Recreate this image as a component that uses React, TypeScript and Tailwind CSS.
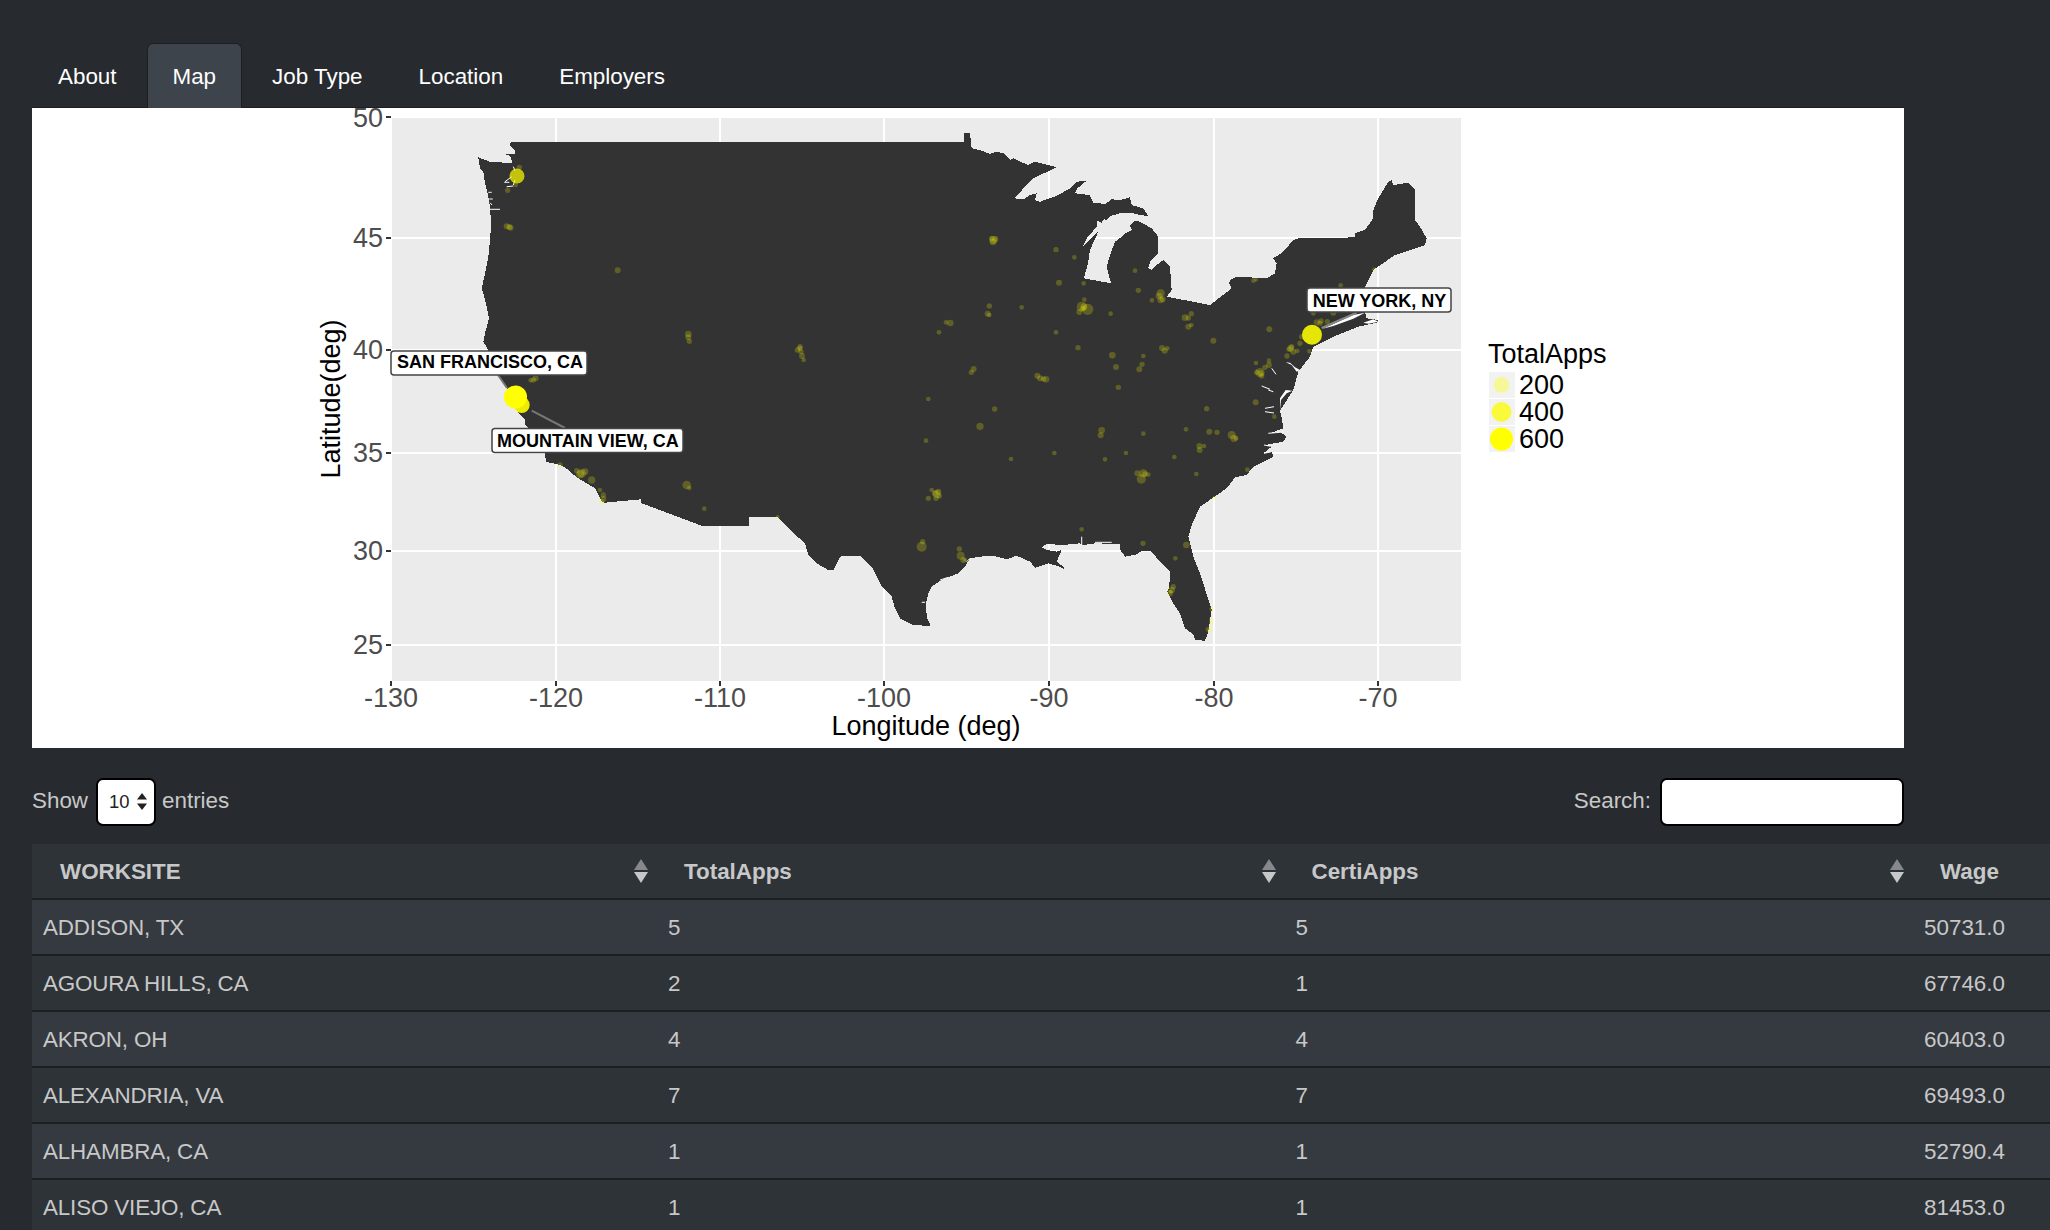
import React from "react";

type P = [number, number];
const seg = (tx: number, ty: number, pts: number[][]): P[] => pts.map(([x, y]) => [tx + x / 3, ty + y / 3] as P);
const A: P = [470, 130], B: P = [800, 130], C: P = [1120, 130], D: P = [470, 390], E: P = [800, 390], F: P = [1120, 390];
const at = (o: P, pts: number[][]) => seg(o[0], o[1], pts);
const toD = (pts: P[], close = true) =>
  pts.map((p, i) => `${i ? "L" : "M"}${p[0].toFixed(1)} ${p[1].toFixed(1)}`).join("") + (close ? "Z" : "");

const land: P[] = [
  ...at(A, [[122,36],[120,48],[133,58],[136,72],[105,72],[120,78],[128,100],[105,98],[60,95],[25,82],[30,115],[40,125],[45,160],[52,185],[58,215],[62,260],[63,290],[60,330],[55,380],[45,430],[35,475],[40,490],[50,530],[57,565],[45,610],[40,635],[55,660],[85,735],[110,775]]),
  ...at(D, [[130,50],[165,90],[165,105],[190,130],[225,190],[228,215],[270,225],[285,232],[320,262],[375,295],[395,335],[405,338],[512,328],[515,340],[695,407],[837,407],[837,380],[920,380],[935,395],[980,440]]),
  ...at(E, [[0,445],[15,460],[25,495],[50,520],[85,540],[100,540],[115,510],[125,497],[180,498],[215,530],[245,590],[275,620],[285,655],[300,685],[340,705],[392,708],[380,680],[378,640],[385,610],[395,590],[425,570],[475,550],[495,530],[510,505],[540,500],[580,497],[620,508],[650,497],[690,515],[705,533],[745,520],[780,530],[790,537],[793,532],[770,515],[785,480],[770,485],[740,480],[725,472],[740,462],[790,465],[840,460],[850,465],[885,460],[960,462]]),
  ...at(F, [[0,478],[15,500],[50,493],[65,482],[90,482],[150,545],[148,590],[142,605],[160,640],[180,670],[195,715],[222,735],[225,750],[255,752],[265,725],[275,660],[240,550],[220,500],[205,440],[215,405],[240,350],[320,295],[345,262],[380,255],[400,230],[460,200],[455,185],[430,190],[455,170],[435,165],[490,155],[500,140],[480,125],[450,130],[490,115],[485,85],[480,62],[520,0]]),
  ...at(C, [[535,725],[570,680],[580,650],[640,620],[715,590],[775,577],[775,570],[740,565],[735,545],[735,470],[760,420],[825,375],[835,372],[915,345],[920,325],[900,290],[885,270],[885,180],[865,158],[820,165],[815,150],[805,155],[775,205],[760,240],[760,265],[735,300],[705,310],[705,322],[600,325],[535,325],[520,330],[490,365],[460,385],[470,400],[465,430],[440,445],[350,440],[330,450],[328,460],[335,475],[270,525],[140,500],[155,480],[150,410],[130,390],[110,405],[95,420],[85,415],[90,395],[115,370],[115,320],[95,295],[60,275],[45,272],[30,285],[35,300],[15,310],[5,320]]),
  ...at(B, [[945,335],[930,375],[920,410],[933,460],[852,445],[865,395],[870,360],[895,305],[848,352],[860,325],[890,290],[892,272],[905,278],[912,268],[920,270],[932,258],[960,250]]),
  ...at(C, [[40,250],[60,255],[85,258],[70,235],[35,225],[30,202],[0,210]]),
  ...at(B, [[935,208],[915,222],[880,218],[868,195],[825,190],[832,175],[860,152],[830,155],[810,175],[775,195],[750,205],[720,215],[705,210],[710,190],[690,195],[670,208],[642,205],[700,145],[770,112],[745,105],[705,95],[685,105],[660,95],[640,85],[630,90],[610,70],[590,65],[570,72],[545,62],[515,55],[510,10],[492,10],[492,36]]),
];

const whiteShapes: P[][] = [
  at(C, [[608,596],[700,555],[735,548],[700,566],[640,588]]),
  at(C, [[730,578],[760,568],[775,575],[745,581]]),
  at(C, [[497,697],[515,705],[530,725],[540,720],[525,712],[510,698]]),
  at(F, [[480,60],[483,30],[500,10],[517,2],[497,0],[480,25]]),
];
const whiteLines: P[][] = [
  at(A, [[105,155],[125,140]]), at(A, [[130,110],[135,122]]), at(A, [[135,150],[130,165]]), at(A, [[103,157],[118,157]]), at(A, [[110,170],[130,168]]),
  at(A, [[55,187],[65,187]]), at(A, [[58,207],[68,207]]), at(A, [[60,218],[66,225]]), at(A, [[60,238],[90,238]]),
  at(E, [[420,570],[445,562]]), at(E, [[500,515],[510,505]]), at(E, [[365,637],[375,637]]), at(E, [[845,440],[845,465]]), at(E, [[885,457],[935,457]]),
  at(C, [[455,715],[468,733]]), at(C, [[425,768],[450,778]]),
  at(F, [[445,0],[460,5]]), at(F, [[435,55],[462,50]]), at(F, [[435,65],[462,69]]), at(F, [[445,130],[490,126]]), at(F, [[432,165],[452,169]]), at(F, [[432,190],[452,186]]),
];

const dots: P[] = [];
const radii: number[] = [];
const addDots = (o: P, list: number[][]) => list.forEach(([x, y, r]) => { dots.push([o[0] + x / 3, o[1] + y / 3]); radii.push(r / 3); });
addDots(A, [[148,112,8],[113,181,8],[137,165,7],[110,289,9],[118,291,9],[122,293,9],[443,421,9],[655,612,10],[655,622,9],[658,634,8],[982,660,8],[990,655,8],[190,750,8],[197,745,9],[182,751,7]]);
addDots(B, [[580,330,12],[575,325,8],[586,327,9],[579,336,10],[768,359,8],[823,382,7],[777,458,9],[851,460,7],[853,509,7],[845,530,15],[863,538,17],[838,546,9],[852,530,10],[848,535,8],[932,551,7],[568,528,8],[665,532,7],[563,551,9],[568,555,7],[451,579,10],[438,577,7],[417,607,7],[768,607,7],[834,653,8],[937,676,10],[948,711,9],[0,650,8],[3,665,8],[6,678,9],[11,690,7],[521,717,9],[514,727,8],[712,737,9],[720,745,9],[730,747,8],[738,748,10],[955,772,8]]);
addDots(C, [[45,422,7],[55,481,8],[122,490,12],[117,498,10],[128,508,9],[122,510,10],[96,511,7],[400,452,7],[408,449,6],[662,466,7],[195,563,10],[205,564,8],[214,551,8],[205,590,9],[214,585,7],[280,632,9],[448,598,9],[590,577,9],[603,573,8],[600,580,8],[622,575,8],[580,550,7],[640,548,9],[545,620,8],[540,640,8],[512,655,10],[515,650,8],[507,658,8],[520,665,9],[532,663,7],[501,678,8],[568,664,7],[126,654,9],[134,662,9],[142,655,7],[70,678,7],[66,703,8],[58,718,9],[408,699,7],[447,692,7],[447,705,9],[435,712,8],[420,728,14],[422,730,9],[410,727,8],[425,738,8],[762,418,6]]);
addDots(D, [[270,225,8],[320,242,8],[335,250,13],[345,245,10],[330,253,12],[365,270,11],[390,300,7],[400,315,8],[400,327,9],[395,335,8],[650,285,13],[658,294,7],[703,356,7],[923,381,6]]);
addDots(E, [[385,27,7],[584,57,8],[540,109,11],[378,152,7],[633,207,7],[763,189,7],[905,121,10],[902,136,9],[915,208,7],[845,418,7],[395,300,7],[410,312,12],[405,310,9],[415,305,9],[418,318,8],[385,325,8],[408,325,8],[368,455,8],[365,470,15],[478,477,8],[482,497,12],[490,510,9],[495,510,6]]);
addDots(F, [[407,37,9],[260,56,8],[463,80,7],[70,131,7],[198,118,7],[268,125,9],[291,127,8],[335,135,12],[342,145,11],[348,145,7],[238,168,9],[252,168,7],[239,180,9],[18,189,7],[163,201,7],[229,252,7],[52,250,9],[70,250,12],[75,252,8],[85,254,7],[64,267,14],[382,239,7],[284,324,7],[69,460,8],[199,465,10],[166,505,7],[160,590,8],[155,600,10],[150,610,9],[152,605,6],[275,657,7],[274,690,7],[265,718,8],[270,720,7],[273,700,6]]);

const xTicks: [number, string][] = [[391,"-130"],[556,"-120"],[720,"-110"],[884,"-100"],[1049,"-90"],[1214,"-80"],[1378,"-70"]];
const yTicks: [number, string][] = [[117,"50"],[238,"45"],[350,"40"],[453,"35"],[551,"30"],[645,"25"]];

function Tag({ x, y, w, tx, by, text }: { x: number; y: number; w: number; tx: number; by: number; text: string }) {
  return (
    <g>
      <rect x={x} y={y} width={w} height={24} rx={3} fill="#fff" stroke="#444" strokeWidth={1.5} />
      <text x={tx} y={by} fontSize={18} fontWeight={700} fill="#000">{text}</text>
    </g>
  );
}

function MapChart() {
  return (
    <svg viewBox="32 108 1872 640" width={1872} height={640} className="block">
      <rect x={391} y={117} width={1070} height={564} fill="#ebebeb" />
      {yTicks.map(([y]) => <rect key={y} x={391} y={y - 1} width={1070} height={2} fill="#fff" />)}
      {xTicks.map(([x]) => <rect key={x} x={x - 1} y={117} width={2} height={564} fill="#fff" />)}
      <path d={toD(land)} fill="#333333" shapeRendering="crispEdges" />
      {whiteShapes.map((s, i) => <path key={i} d={toD(s)} fill="#fff" />)}
      {whiteLines.map((s, i) => <path key={i} d={toD(s, false)} stroke="#fff" strokeWidth={1} fill="none" />)}
      {dots.map((p, i) => <circle key={i} cx={p[0]} cy={p[1]} r={radii[i]} fill="#ffff00" fillOpacity={0.22} />)}
      <circle cx={517} cy={176} r={7.5} fill="#ffff00" fillOpacity={0.7} />
      <circle cx={1312} cy={334.7} r={10} fill="#ffff00" fillOpacity={0.88} />
      <circle cx={521.7} cy={405} r={8} fill="#ffff00" fillOpacity={0.9} />
      <circle cx={515.5} cy={397} r={11.5} fill="#ffff00" />
      <path d="M498 375L507 388" stroke="#777" strokeWidth={2} />
      <path d="M531.7 410.7L565 428" stroke="#777" strokeWidth={2} />
      <path d="M1321.7 328L1356.7 312.7" stroke="#888" strokeWidth={2} />
      <Tag x={391} y={351} w={196} tx={397} by={368} text="SAN FRANCISCO, CA" />
      <Tag x={492} y={428.5} w={191} tx={497} by={447} text="MOUNTAIN VIEW, CA" />
      <Tag x={1307} y={288} w={144} tx={1312.7} by={306.5} text="NEW YORK, NY" />
      {xTicks.map(([x, t]) => (
        <g key={t}>
          <rect x={x - 1} y={681} width={2} height={5} fill="#333" />
          <text x={x} y={707} fontSize={27} fill="#4d4d4d" textAnchor="middle">{t}</text>
        </g>
      ))}
      {yTicks.map(([y, t]) => (
        <g key={t}>
          <rect x={386} y={y - 1} width={5} height={2} fill="#333" />
          <text x={383} y={t === "50" ? y + 10 : y + 9} fontSize={27} fill="#4d4d4d" textAnchor="end">{t}</text>
        </g>
      ))}
      <text x={926} y={735} fontSize={27} fill="#000" textAnchor="middle">Longitude (deg)</text>
      <text transform="translate(340 399) rotate(-90)" fontSize={27} fill="#000" textAnchor="middle">Latitude(deg)</text>
      <text x={1488} y={363} fontSize={27} fill="#000">TotalApps</text>
      {[
        { y: 372, cy: 385, r: 8, c: "#f7f79a", t: "200", b: 394 },
        { y: 399, cy: 412, r: 10, c: "#fafa3c", t: "400", b: 421 },
        { y: 426, cy: 439, r: 11.5, c: "#ffff00", t: "600", b: 448 },
      ].map((l) => (
        <g key={l.t}>
          <rect x={1489} y={l.y} width={26} height={26} fill="#f2f2f2" />
          <circle cx={1501.5} cy={l.cy} r={l.r} fill={l.c} />
          <text x={1519} y={l.b} fontSize={27} fill="#000">{l.t}</text>
        </g>
      ))}
    </svg>
  );
}

function SortIcon() {
  return (
    <svg width={14} height={24} viewBox="0 0 14 24" className="shrink-0">
      <path d="M7 0L14 11H0Z" fill="#85898d" />
      <path d="M0 13H14L7 24Z" fill="#c8c8c8" />
    </svg>
  );
}

const rows = [
  ["ADDISON, TX", "5", "5", "50731.0"],
  ["AGOURA HILLS, CA", "2", "1", "67746.0"],
  ["AKRON, OH", "4", "4", "60403.0"],
  ["ALEXANDRIA, VA", "7", "7", "69493.0"],
  ["ALHAMBRA, CA", "1", "1", "52790.4"],
  ["ALISO VIEJO, CA", "1", "1", "81453.0"],
];

const tabs = ["About", "Map", "Job Type", "Location", "Employers"];

export default function App() {
  return (
    <div className="h-[1230px] w-[2050px] overflow-hidden bg-[#272b30] font-['Liberation_Sans',Arial,sans-serif] text-[22.4px] text-[#c8c8c8]">
      <div className="ml-[32px] flex h-[108px] w-[1872px] items-end gap-[4px] border-b border-[#1c1e22]">
        {tabs.map((t) => (
          <div
            key={t}
            className={
              t === "Map"
                ? "-mb-[1px] flex h-[65px] items-center rounded-t-[6px] border border-b-0 border-[#1c1e22] bg-[#3e444c] px-[25px] pt-[2px] text-white"
                : "-mb-[1px] flex h-[65px] items-center border border-transparent px-[25px] pt-[2px] text-white"
            }
          >
            {t}
          </div>
        ))}
      </div>
      <div className="ml-[32px] h-[640px] w-[1872px] bg-white">
        <MapChart />
      </div>
      <div className="ml-[32px] flex h-[96px] w-[1872px] items-start justify-between pt-[30px]">
        <div className="flex h-[48px] items-center">
          <span className="-mt-[2px]">Show</span>
          <div className="ml-[8px] flex h-[48px] w-[60px] items-center rounded-[7px] border-2 border-black bg-white pl-[11px] text-[18.4px] text-[#222]">
            <span>10</span>
            <svg width={10} height={18} viewBox="0 0 10 18" className="ml-[8px]">
              <path d="M5 0L10 6.5H0Z" fill="#222" />
              <path d="M0 10.5H10L5 17Z" fill="#222" />
            </svg>
          </div>
          <span className="-mt-[2px] ml-[6px]">entries</span>
        </div>
        <div className="flex h-[48px] items-center">
          <span className="-mt-[2px]">Search:</span>
          <input aria-label="Search" className="ml-[9px] h-[48px] w-[244px] rounded-[7px] border-2 border-black bg-white" />
        </div>
      </div>
      <div className="ml-[32px] w-[2018px]">
        <div className="grid h-[56px] grid-cols-[624px_627.5px_628.5px_138px] items-center border-b-2 border-[#1c1e22] bg-[#2e3338] font-bold">
          {["WORKSITE", "TotalApps", "CertiApps"].map((h) => (
            <div key={h} className="flex items-center justify-between pl-[28px] pr-[8px]">
              <span className="pt-[2px]">{h}</span>
              <SortIcon />
            </div>
          ))}
          <div className="pl-[28px] pt-[2px]">Wage</div>
        </div>
        {rows.map((r, i) => (
          <div
            key={r[0]}
            className={
              i % 2 === 0
                ? "grid h-[56px] grid-cols-[624px_627.5px_628.5px_138px] items-center border-b-2 border-[#1c1e22] bg-[#353a41] pt-[2px]"
                : "grid h-[56px] grid-cols-[624px_627.5px_628.5px_138px] items-center border-b-2 border-[#1c1e22] bg-[#2e3338] pt-[2px]"
            }
          >
            <div className="pl-[11px] tracking-[-0.15px]">{r[0]}</div>
            <div className="pl-[12px]">{r[1]}</div>
            <div className="pl-[12px]">{r[2]}</div>
            <div className="pr-[45px] text-right">{r[3]}</div>
          </div>
        ))}
      </div>
    </div>
  );
}
